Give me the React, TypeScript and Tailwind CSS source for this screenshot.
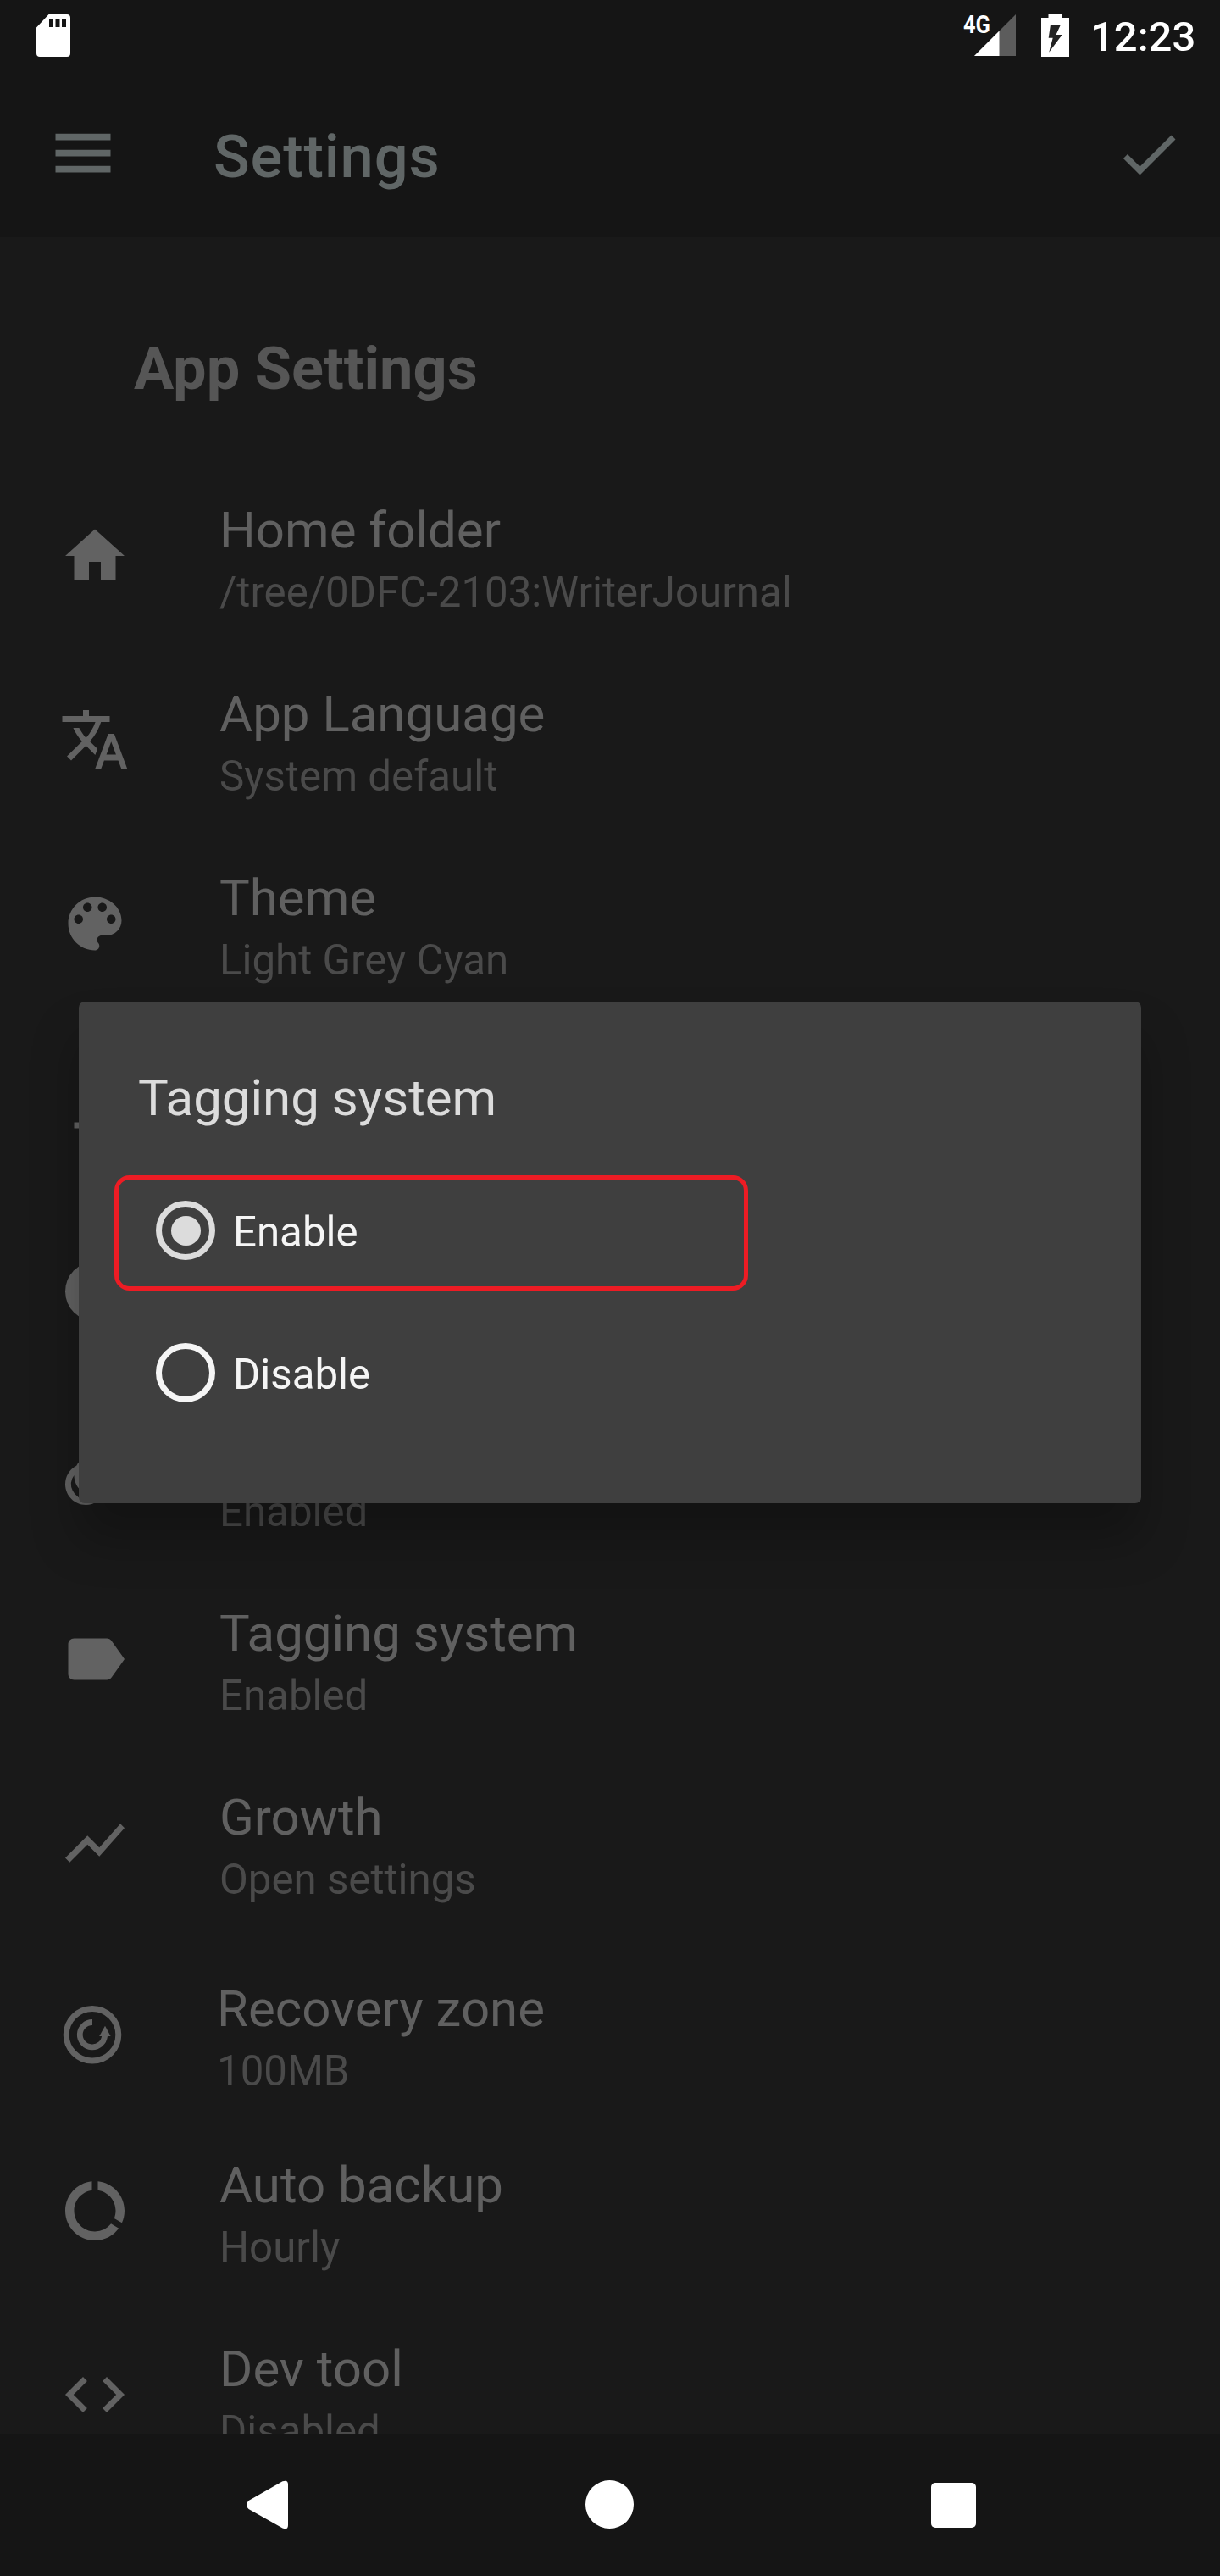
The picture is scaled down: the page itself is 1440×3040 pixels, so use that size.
import type { ReactNode } from "react";
import { MdAnimation, MdCode, MdDataUsage } from "react-icons/md";

type IconProps = { d: string };

function Glyph({ d }: IconProps) {
  return (
    <svg viewBox="0 0 24 24" className="size-[84px]" fill="currentColor">
      <path d={d} />
    </svg>
  );
}

function RecoveryIcon() {
  return (
    <svg viewBox="0 0 84 84" className="size-[84px]" fill="none" stroke="currentColor">
      <circle cx="42" cy="42.200" r="30.800" strokeWidth="7" />
      <path d="M42 27.500A14.700 14.700 0 1 0 56.600 43.700" strokeWidth="6.800" />
      <path d="M57 31.700L63.600 43.900H50.200Z" fill="currentColor" stroke="none" />
    </svg>
  );
}

type Row = { title: string; sub: string; icon: ReactNode; className?: string };

const rows: Row[] = [
  {
    title: "Home folder",
    sub: "/tree/0DFC-2103:WriterJournal",
    icon: <Glyph d="M10 20v-6h4v6h5v-8h3L12 3 2 12h3v8z" />,
  },
  {
    title: "App Language",
    sub: "System default",
    icon: (
      <Glyph d="M12.87 15.07l-2.54-2.51.03-.03c1.74-1.94 2.98-4.17 3.71-6.53H17V4h-7V2H8v2H1v1.99h11.17C11.5 7.92 10.44 9.75 9 11.35 8.07 10.32 7.3 9.19 6.69 8h-2c.73 1.63 1.73 3.17 2.98 4.56l-5.09 5.02L4 19l5-5 3.11 3.11.76-2.04zM18.5 10h-2L12 22h2l1.12-3h4.75L21 22h2l-4.5-12zm-2.62 7l1.62-4.33L19.12 17h-3.24z" />
    ),
  },
  {
    title: "Theme",
    sub: "Light Grey Cyan",
    icon: (
      <Glyph d="M12 3c-4.97 0-9 4.03-9 9s4.03 9 9 9c.83 0 1.5-.67 1.5-1.5 0-.39-.15-.74-.39-1.01-.23-.26-.38-.61-.38-.99 0-.83.67-1.5 1.5-1.5H16c2.76 0 5-2.24 5-5 0-4.42-4.03-8-9-8zm-5.5 9c-.83 0-1.5-.67-1.5-1.5S5.67 9 6.5 9 8 9.67 8 10.5 7.33 12 6.5 12zm3-4C8.67 8 8 7.33 8 6.5S8.67 5 9.5 5s1.5.67 1.5 1.5S10.33 8 9.5 8zm5 0c-.83 0-1.5-.67-1.5-1.5S13.67 5 14.5 5s1.5.67 1.5 1.5S15.33 8 14.5 8zm3 4c-.83 0-1.5-.67-1.5-1.5S16.67 9 17.5 9s1.5.67 1.5 1.5-.67 1.5-1.5 1.5z" />
    ),
  },
  { title: "", sub: "", icon: <Glyph d="M5 17v2h14v-2H5z" /> },
  { title: "", sub: "", icon: <Glyph d="M12 2a10 10 0 1 0 0 20a10 10 0 1 0 0-20z" /> },
  { title: "", sub: "Enabled", icon: <MdAnimation className="size-[84px]" /> },
  {
    title: "Tagging system",
    sub: "Enabled",
    icon: (
      <Glyph d="M17.63 5.84C17.27 5.33 16.67 5 16 5L5 5.01C3.9 5.01 3 5.9 3 7v10c0 1.1.9 1.99 2 1.99L16 19c.67 0 1.27-.33 1.63-.84L22 12l-4.37-6.16z" />
    ),
  },
  {
    title: "Growth",
    sub: "Open settings",
    icon: <Glyph d="M3.5 18.49l6-6.01 4 4L22 6.92l-1.41-1.41-7.09 7.97-4-4L2 16.99z" />,
  },
  {
    title: "Recovery zone",
    sub: "100MB",
    icon: <RecoveryIcon />,
    className: "mt-[9px] -mb-[9px] -ml-[3px]",
  },
  { title: "Auto backup", sub: "Hourly", icon: <MdDataUsage className="size-[84px]" /> },
  { title: "Dev tool", sub: "Disabled", icon: <MdCode className="size-[84px]" /> },
];

function SettingRow({ title, sub, icon, className = "" }: Row) {
  return (
    <li className={`flex h-[217px] shrink-0 items-start pl-[70px] ${className}`}>
      <span className="mt-[67px] shrink-0 text-[#626262]">{icon}</span>
      <div className="ml-[105px] pt-[43px]">
        <p className="h-[72px] text-[60px] leading-[72px] whitespace-nowrap text-[#606060]">{title}</p>
        <p className="mt-[7px] h-[60px] text-[49.2px] leading-[60px] whitespace-nowrap text-[#4a4a4a]">{sub}</p>
      </div>
    </li>
  );
}

function StatusBar() {
  return (
    <div className="flex h-[84px] items-start text-white">
      <svg viewBox="0 0 40 50" className="mt-[17px] ml-[43px] h-[50px] w-10">
        <path
          fill="currentColor"
          fillRule="evenodd"
          d="M14.5 0H36a4 4 0 0 1 4 4V46a4 4 0 0 1-4 4H4a4 4 0 0 1-4-4V15.500zM15 5v10h5V5zM22.500 5v10h5V5zM30 5v10h5V5z"
        />
      </svg>
      <div className="relative mt-[17px] ml-[1066px] h-[49px] w-[50px]">
        <svg viewBox="0 0 50 49" className="h-[49px] w-[50px]">
          <path d="M50 0V49H1Z" fill="#5c5c5c" />
          <path d="M30.500 19.500V49H1Z" fill="#fff" />
        </svg>
        <span className="absolute -top-[5px] -left-[12px] origin-left scale-x-[0.86] text-[29.5px] leading-[34px] font-bold">4G</span>
      </div>
      <svg viewBox="0 0 33 51" className="mt-4 ml-[30px] h-[51px] w-[33px]">
        <path d="M8.500 0H25V5H33V51H0V5H8.500Z" fill="#fff" />
        <path d="M11 13H23L17.500 25H24.700L9.200 45.700L13.700 28.700H8.700Z" fill="#222" />
      </svg>
      <span className="mt-[14px] ml-[25px] text-[49px] leading-[60px] font-medium whitespace-nowrap">12:23</span>
    </div>
  );
}

function AppBar() {
  return (
    <header className="flex h-[196px] items-start text-[#606666]">
      <svg viewBox="0 0 66 48" className="mt-[72px] ml-[65px] h-12 w-[66px]" fill="currentColor">
        <path d="M.5 1.700h65v7.700H.5zM.5 20.700h65v7.700H.5zM.5 39.700h65v7.700H.5z" />
      </svg>
      <h1 className="mt-[61px] ml-[121px] text-[70.5px] leading-[80px] font-medium tracking-[0.85px]">Settings</h1>
      <span className="mt-14 mr-[42px] ml-auto">
        <Glyph d="M9 16.17L4.83 12l-1.42 1.41L9 19 21 7l-1.41-1.41z" />
      </span>
    </header>
  );
}

function Option({ label, checked }: { label: string; checked?: boolean }) {
  return (
    <div className={`flex h-[70px] items-center gap-[21px] ${checked ? "text-[#dcdcdc]" : "text-[#f5f5f5]"}`}>
      <span className="flex size-[70px] items-center justify-center rounded-full border-[7px] border-current">
        {checked && <span className="size-[35px] rounded-full bg-current" />}
      </span>
      <span className="mt-[3px] text-[49.2px] leading-[60px] text-[#f5f5f5]">{label}</span>
    </div>
  );
}

function Dialog() {
  return (
    <div
      role="dialog"
      className="absolute top-[1182px] left-[93px] h-[592px] w-[1254px] rounded-[7px] bg-[#3f3f3f] shadow-[0_42px_56px_rgba(0,0,0,0.25)]"
    >
      <h2 className="mt-[78px] ml-[70px] text-[60px] leading-[72px] text-[#dcdcdc]">Tagging system</h2>
      <div className="mt-[55px] ml-[42px] flex h-[136px] w-[748px] items-start rounded-[18px] border-[5px] border-[#ed1c24] pt-[25px] pl-[44px]">
        <Option label="Enable" checked />
      </div>
      <div className="mt-[62px] ml-[91px]">
        <Option label="Disable" />
      </div>
    </div>
  );
}

function NavBar() {
  return (
    <nav className="flex h-[168px] shrink-0 items-start bg-[#151515] text-white">
      <svg viewBox="0 0 50 58" className="mt-[55px] ml-[291px] h-[58px] w-[50px]" fill="currentColor">
        <path d="M2.500 24L42.500 1.300Q49 -1 49 5V53Q49 59 42.500 56.500L2.500 34Q-2.300 29 2.500 24Z" />
      </svg>
      <span className="mt-[55px] ml-[350px] size-[57px] rounded-full bg-white" />
      <span className="mt-[58px] ml-[351px] size-[53px] rounded-[5px] bg-white" />
    </nav>
  );
}

export default function App() {
  return (
    <div className="relative flex h-[3040px] w-[1440px] flex-col overflow-hidden bg-[#191919] font-[Roboto,sans-serif]">
      <div className="shrink-0 bg-[#151515]">
        <StatusBar />
        <AppBar />
      </div>
      <main className="flex min-h-0 flex-1 flex-col overflow-hidden">
        <h2 className="mt-[115px] ml-[158px] shrink-0 text-[70.3px] leading-[80px] font-bold text-[#565656]">App Settings</h2>
        <ul className="mt-[72px] flex flex-col">
          {rows.map((row, i) => (
            <SettingRow key={i} {...row} />
          ))}
        </ul>
      </main>
      <NavBar />
      <Dialog />
    </div>
  );
}
